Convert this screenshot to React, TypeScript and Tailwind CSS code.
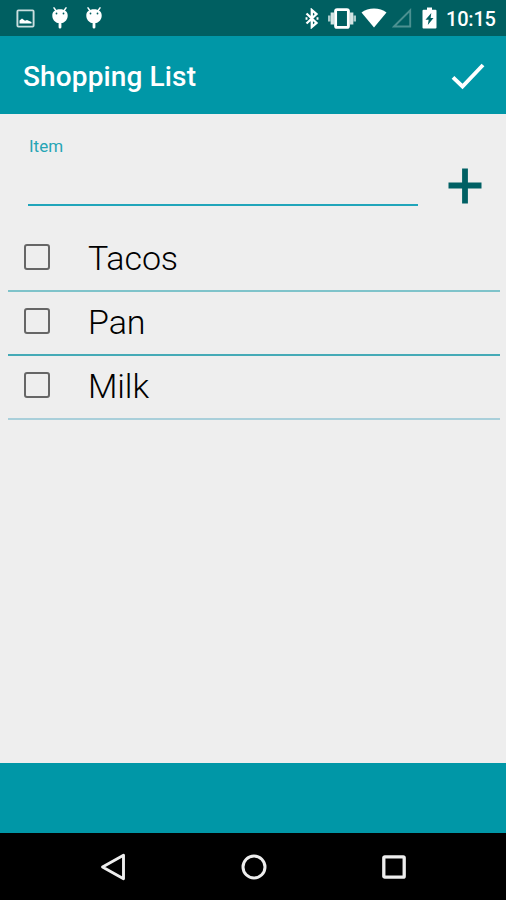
import type { ReactNode } from "react";

const items = [
  { name: "Tacos", line: "border-[#7fc3ca]" },
  { name: "Pan", line: "border-[#44aab6]" },
  { name: "Milk", line: "border-[#a9cfda]" },
];

function Glyph({ w, h, className, children }: { w: number; h: number; className?: string; children: ReactNode }) {
  return (
    <svg width={w} height={h} viewBox={`0 0 ${w} ${h}`} fill="none" className={`shrink-0 ${className ?? ""}`}>
      {children}
    </svg>
  );
}

function Droid({ className }: { className?: string }) {
  return (
    <Glyph w={16} h={22} className={className}>
      <path d="M2 .8 4.2 4M14 .8 11.8 4" stroke="white" strokeWidth="1.5" strokeLinecap="round" />
      <path d="M.3 8.500C.3 4.600 3.300 2.300 8 2.300s7.700 2.300 7.700 6.200c0 3.800-2.500 6.800-5.600 7.500H9.400V20.200a1.400 1.400 0 0 1-2.800 0V16H5.900C2.800 15.300.3 12.300.3 8.500Z" fill="white" />
      <circle cx="4.500" cy="6.500" r=".9" fill="#005f61" />
      <circle cx="11.500" cy="6.500" r=".9" fill="#005f61" />
    </Glyph>
  );
}

export default function App() {
  return (
    <div className="flex h-[900px] w-[506px] flex-col overflow-hidden bg-[#eeeeee] font-['Roboto',sans-serif]">
      <div className="flex h-9 shrink-0 items-center bg-[#005f61] pl-4 pr-[10px] text-white">
        <Glyph w={19} h={19}>
          <rect x="1.400" y="1.400" width="16.200" height="16.200" rx="1" stroke="#c9dfdf" strokeWidth="1.900" />
          <path d="M3.500 14.500V11.500l2.500-2 3 2.300 2-.8 4.500 2v1.500Z" fill="white" />
        </Glyph>
        <Droid className="ml-[17px]" />
        <Droid className="ml-[18px]" />
        <Glyph w={14} h={21} className="ml-auto">
          <path d="M1.500 5.500 11.500 15 6.800 19V2l4.700 4L1.500 15.500" stroke="white" strokeWidth="2.300" />
          <path d="M12.500 9.300v2.400M1.500 9.300v2.400" stroke="white" strokeWidth="1.900" />
        </Glyph>
        <Glyph w={28} h={21} className="ml-[9px]">
          <rect x="7.600" y="1.600" width="12.800" height="17.800" rx="1.500" stroke="white" strokeWidth="2.900" />
          <path d="M4.300 4.500v12M23.700 4.500v12" stroke="#d4e5e5" strokeWidth="3.300" />
          <path d="M1.300 7.500v6M26.700 7.500v6" stroke="#a9caca" strokeWidth="2.600" />
        </Glyph>
        <Glyph w={26} h={20} className="ml-[5px]">
          <path d="M.5 4.500C7-.8 19-.8 25.500 4.500L13 19.500Z" fill="white" />
        </Glyph>
        <Glyph w={20} h={20} className="ml-[5px]">
          <path d="M2 18.500 18.200 2.300V18.500Z" stroke="#4c9191" strokeWidth="1.900" />
        </Glyph>
        <Glyph w={15} h={22} className="ml-[10px]">
          <path d="M5 .5h5v2.200h3.500q1 0 1 1V20.500q0 1-1 1h-12q-1 0-1-1V3.700q0-1 1-1H5Z" fill="white" />
          <path d="M9.300 6 3.500 12.800h3.200L5.800 18l5.700-7H8.600Z" fill="#005f61" />
        </Glyph>
        <span className="ml-[9px] mt-0.5 w-[50px] whitespace-nowrap text-[20px] font-medium leading-none tracking-[-0.2px]">10:15</span>
      </div>

      <header className="flex h-[78px] shrink-0 items-center justify-between bg-[#0097a7] pl-[23px] pr-[21px] text-white">
        <h1 className="mt-1 whitespace-nowrap text-[28px] font-medium leading-8 tracking-[0.13px]">Shopping List</h1>
        <Glyph w={34} h={28} className="mt-0.5">
          <path d="m2 15.300 9.500 9.200L32 3" stroke="white" strokeWidth="3.900" />
        </Glyph>
      </header>

      <main className="flex flex-1 flex-col">
        <div className="flex h-[114px] items-start pl-7">
          <label className="flex h-[92px] w-[390px] flex-col border-b-2 border-[#20a5ba] pl-px pt-[22px] text-[17px] leading-5 text-[#26a5b5]">
            Item
          </label>
          <Glyph w={34} h={36} className="ml-[30px] mt-[54px]">
            <path d="M17 .5v35M.5 17.500h33" stroke="#006064" strokeWidth="5.800" />
          </Glyph>
        </div>
        <ul className="flex flex-col pl-2 pr-[6px]">
          {items.map((item) => (
            <li key={item.name} className={`flex h-16 items-center border-b-2 ${item.line}`}>
              <span className="mb-1 ml-4 size-[26px] shrink-0 rounded-[3px] border-2 border-[#666666]" />
              <span className="mb-0.5 ml-[38px] text-[34px] font-light leading-10 tracking-[-0.1px] text-black">{item.name}</span>
            </li>
          ))}
        </ul>
      </main>

      <footer className="h-[70px] shrink-0 bg-[#0097a7]" />
      <nav className="flex h-[67px] shrink-0 items-center bg-black pl-[100px]">
        <Glyph w={27} h={28}>
          <path d="M2.500 14 23.500 2.200V25.800Z" stroke="#eeeeee" strokeWidth="2.900" strokeLinejoin="round" />
        </Glyph>
        <Glyph w={26} h={26} className="ml-[114px]">
          <circle cx="13" cy="13" r="11" stroke="#eeeeee" strokeWidth="3" />
        </Glyph>
        <Glyph w={26} h={26} className="ml-[114px]">
          <rect x="2.800" y="2.800" width="20.400" height="20.400" rx="1" stroke="#eeeeee" strokeWidth="3.300" />
        </Glyph>
      </nav>
    </div>
  );
}
